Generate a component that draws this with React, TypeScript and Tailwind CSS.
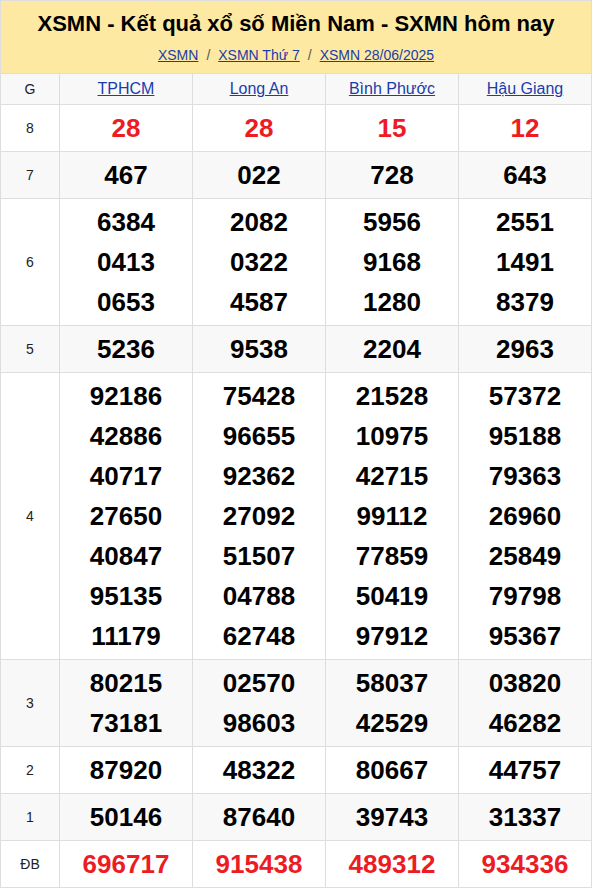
import React from 'react'

const provinces = ['TPHCM', 'Long An', 'Bình Phước', 'Hậu Giang']

type Prize = { label: string; nums: string[][]; red?: boolean }

const prizes: Prize[] = [
  { label: '8', nums: [['28'], ['28'], ['15'], ['12']], red: true },
  { label: '7', nums: [['467'], ['022'], ['728'], ['643']] },
  {
    label: '6',
    nums: [
      ['6384', '0413', '0653'],
      ['2082', '0322', '4587'],
      ['5956', '9168', '1280'],
      ['2551', '1491', '8379'],
    ],
  },
  { label: '5', nums: [['5236'], ['9538'], ['2204'], ['2963']] },
  {
    label: '4',
    nums: [
      ['92186', '42886', '40717', '27650', '40847', '95135', '11179'],
      ['75428', '96655', '92362', '27092', '51507', '04788', '62748'],
      ['21528', '10975', '42715', '99112', '77859', '50419', '97912'],
      ['57372', '95188', '79363', '26960', '25849', '79798', '95367'],
    ],
  },
  {
    label: '3',
    nums: [
      ['80215', '73181'],
      ['02570', '98603'],
      ['58037', '42529'],
      ['03820', '46282'],
    ],
  },
  { label: '2', nums: [['87920'], ['48322'], ['80667'], ['44757']] },
  { label: '1', nums: [['50146'], ['87640'], ['39743'], ['31337']] },
  { label: 'ĐB', nums: [['696717'], ['915438'], ['489312'], ['934336']], red: true },
]

const App = () => {
  return (
    <div className="w-[592px] bg-white font-['Liberation_Sans',Arial,sans-serif]">
      <div className="border border-[#dddddd]">
        {/* Title block */}
        <div className="h-[73px] bg-[#fde9a2] border-b border-[#dddddd] pt-[9px] text-center">
          <h1 className="text-[22px] leading-[28px] font-bold text-black">
            XSMN - Kết quả xổ số Miền Nam - SXMN hôm nay
          </h1>
          <div className="mt-[7px] text-[14px] leading-[20px] text-[#555]">
            <a href="#" className="text-[#1b3cab] underline">XSMN</a>
            <span className="mx-[8px]">/</span>
            <a href="#" className="text-[#1b3cab] underline">XSMN Thứ 7</a>
            <span className="mx-[8px]">/</span>
            <a href="#" className="text-[#1b3cab] underline">XSMN 28/06/2025</a>
          </div>
        </div>

        {/* Header row */}
        <div className="grid grid-cols-[58px_1fr_1fr_1fr_1fr] bg-[#f8f8f8] border-b border-[#dddddd]">
          <div className="h-[30px] flex items-center justify-center text-[14px] text-[#222]">G</div>
          {provinces.map((p) => (
            <div key={p} className="h-[30px] flex items-center justify-center border-l border-[#dddddd]">
              <a href="#" className="text-[16px] text-[#1b3cab] underline">{p}</a>
            </div>
          ))}
        </div>

        {/* Prize rows */}
        {prizes.map((row, i) => (
          <div
            key={row.label}
            className={`grid grid-cols-[58px_1fr_1fr_1fr_1fr] border-b border-[#dddddd] last:border-b-0 ${
              i % 2 === 1 ? 'bg-[#f8f8f8]' : 'bg-white'
            }`}
          >
            <div className="flex items-center justify-center text-[14px] text-[#222]">{row.label}</div>
            {row.nums.map((col, j) => (
              <div key={j} className="border-l border-[#dddddd] py-[3px] flex flex-col items-center">
                {col.map((n, k) => (
                  <div
                    key={k}
                    className={`h-[40px] leading-[40px] text-[26px] font-bold ${
                      row.red ? 'text-[#ed1c24]' : 'text-black'
                    }`}
                  >
                    {n}
                  </div>
                ))}
              </div>
            ))}
          </div>
        ))}
      </div>
    </div>
  )
}

export default App
